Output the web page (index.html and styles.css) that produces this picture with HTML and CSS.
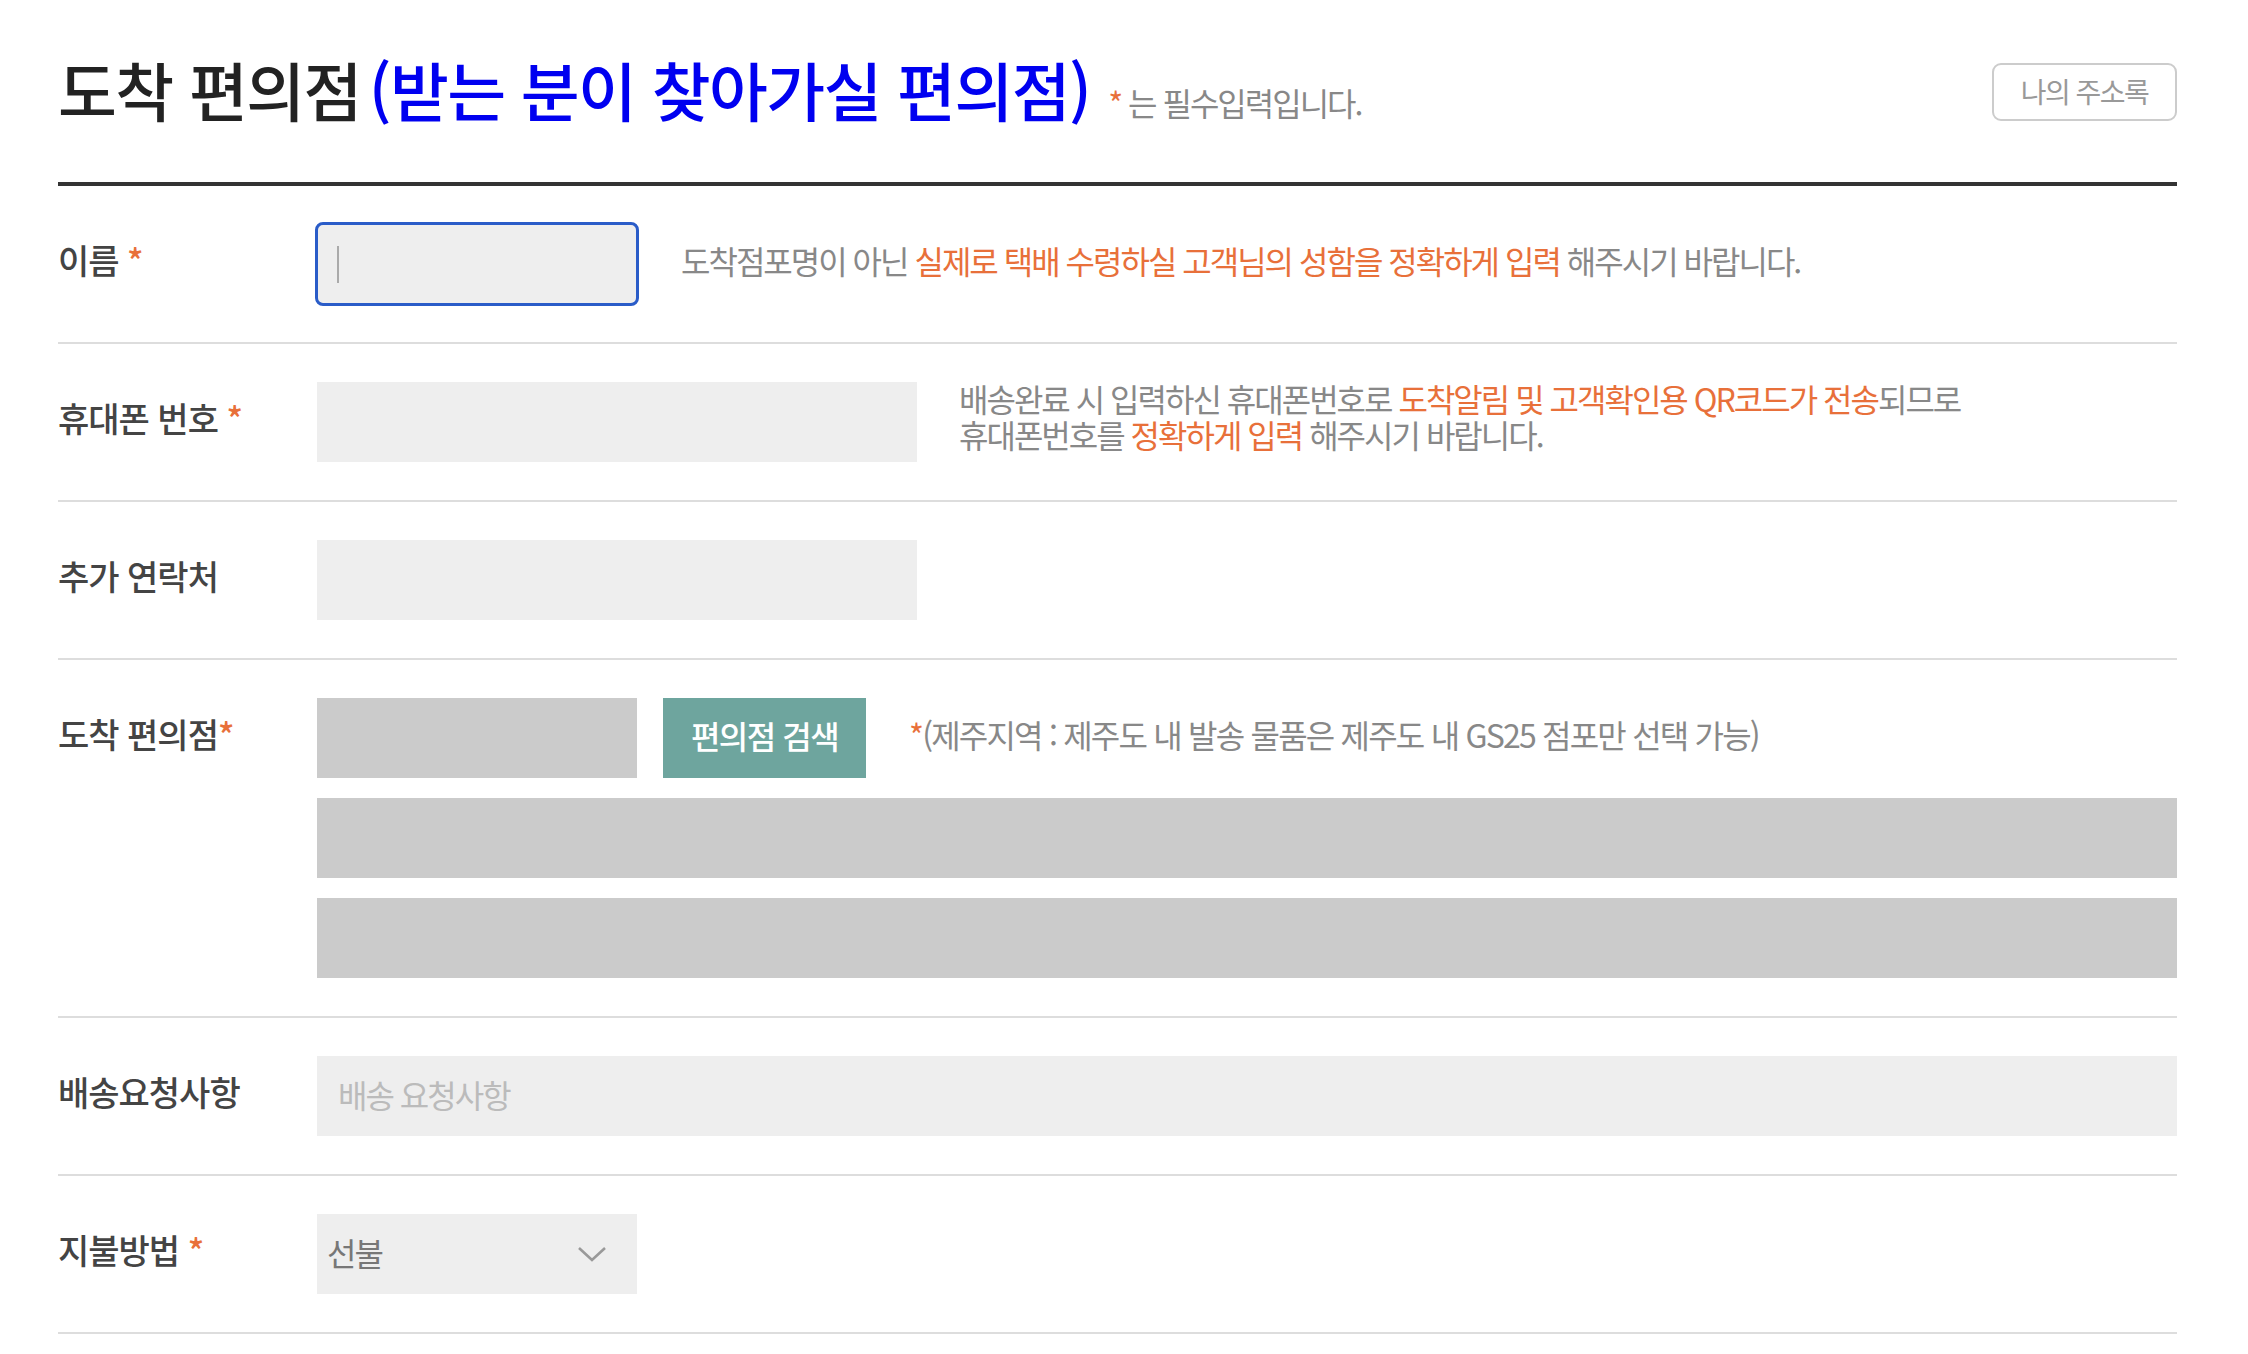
FILE: index.html
```html
<!DOCTYPE html>
<html lang="ko">
<head>
<meta charset="utf-8">
<title>도착 편의점</title>
<link rel="stylesheet" href="styles.css">
</head>
<body>
<div class="page">
  <header class="head">
    <div class="head-left">
      <h1 class="title">도착 편의점<span class="title-blue">(받는 분이 찾아가실 편의점)</span></h1>
      <p class="req-note"><span class="star">*</span> 는 필수입력입니다.</p>
    </div>
    <button class="addr-btn" type="button">나의 주소록</button>
  </header>

  <div class="form">
    <div class="row">
      <div class="label">이름 <span class="star">*</span></div>
      <div class="field">
        <div class="line">
          <div class="box box-s focused"><span class="caret"></span></div>
          <p class="desc">도착점포명이 아닌 <em>실제로 택배 수령하실 고객님의 성함을 정확하게 입력</em> 해주시기 바랍니다.</p>
        </div>
      </div>
    </div>

    <div class="row">
      <div class="label">휴대폰 번호 <span class="star">*</span></div>
      <div class="field">
        <div class="line">
          <div class="box box-m"></div>
          <p class="desc desc-2">배송완료 시 입력하신 휴대폰번호로 <em>도착알림 및 고객확인용 QR코드가 전송</em>되므로<br>휴대폰번호를 <em>정확하게 입력</em> 해주시기 바랍니다.</p>
        </div>
      </div>
    </div>

    <div class="row">
      <div class="label">추가 연락처</div>
      <div class="field">
        <div class="line">
          <div class="box box-m"></div>
        </div>
      </div>
    </div>

    <div class="row">
      <div class="label">도착 편의점<span class="star">*</span></div>
      <div class="field">
        <div class="line">
          <div class="box box-s dark"></div>
          <button class="search-btn" type="button">편의점 검색</button>
          <p class="desc store-note"><span class="star">*</span>(제주지역 : 제주도 내 발송 물품은 제주도 내 GS25 점포만 선택 가능)</p>
        </div>
        <div class="box box-full dark bar"></div>
        <div class="box box-full dark bar"></div>
      </div>
    </div>

    <div class="row">
      <div class="label">배송요청사항</div>
      <div class="field">
        <div class="box box-full placeholder">배송 요청사항</div>
      </div>
    </div>

    <div class="row">
      <div class="label">지불방법 <span class="star">*</span></div>
      <div class="field">
        <div class="box box-s select">
          <span class="select-text">선불</span>
          <svg class="chev" width="30" height="17" viewBox="0 0 30 17" aria-hidden="true"><path d="M2 2 L15 14 L28 2" fill="none" stroke="#999" stroke-width="2.6"/></svg>
        </div>
      </div>
    </div>
  </div>
</div>
</body>
</html>
```

FILE: styles.css
```css
* { box-sizing: border-box; }
html, body { margin: 0; padding: 0; background: #fff; }
body {
  font-family: "Noto Sans CJK KR", "Noto Sans", sans-serif;
  color: #333;
}
.page {
  width: 2119px;
  margin-left: 58px;
}
.head {
  display: flex;
  align-items: center;
  justify-content: space-between;
  height: 182px;
  border-bottom: 4px solid #333;
  box-sizing: content-box;
}
.head-left {
  display: flex;
  align-items: baseline;
  margin-bottom: 6px;
}
.title {
  margin: 0;
  font-size: 64px;
  font-weight: 500;
  letter-spacing: -1.6px;
  color: #222;
  line-height: 1.2;
}
.title-blue { color: #0000f0; margin-left: 8px; }
.req-note {
  margin: 0 0 0 18px;
  font-size: 32px;
  color: #888;
  letter-spacing: -2px;
}
.star { color: #e8703a; font-style: normal; }
.addr-btn {
  width: 185px;
  height: 58px;
  border: 2px solid #ccc;
  border-radius: 9px;
  background: #fff;
  color: #999;
  font-family: inherit;
  font-size: 28px;
  letter-spacing: -1.5px;
  padding: 0 0 3px;
  margin-top: 2px;
}
.row {
  display: grid;
  grid-template-columns: 259px 1fr;
  padding: 38px 0;
  border-bottom: 2px solid #ddd;
}
.label {
  height: 80px;
  line-height: 72px;
  padding-bottom: 8px;
  font-size: 34px;
  font-weight: 500;
  color: #444;
  letter-spacing: -1px;
}
.field { display: flex; flex-direction: column; }
.line { display: flex; align-items: center; height: 80px; }
.box {
  height: 80px;
  background: #eee;
  flex: none;
}
.box-s { width: 320px; }
.box-m { width: 600px; }
.box-full { width: 100%; }
.dark { background: #cbcbcb; }
.bar { margin-top: 20px; }
.focused {
  border-radius: 6px;
  outline: 3px solid #2a5cc8;
  outline-offset: -1px;
  display: flex;
  align-items: center;
  padding-left: 20px;
}
.caret {
  width: 2px;
  height: 37px;
  background: #aaa;
}
.desc {
  margin: 0 0 0 44px;
  padding-bottom: 8px;
  font-size: 32px;
  line-height: 37px;
  color: #888;
  letter-spacing: -2px;
}
.desc-2 { padding-bottom: 12px; line-height: 36px; margin-left: 42px; }
.desc em { font-style: normal; color: #e8703a; }
.search-btn {
  width: 203px;
  height: 80px;
  margin-left: 26px;
  border: 0;
  background: #6ea59e;
  color: #fff;
  font-family: inherit;
  font-size: 32px;
  font-weight: 500;
  letter-spacing: -1.5px;
  padding: 0 0 6px;
}
.store-note { margin-left: 43px; letter-spacing: -1.8px; }
.placeholder {
  display: flex;
  align-items: center;
  padding: 0 0 5px 21px;
  font-size: 32px;
  color: #bbb;
  letter-spacing: -2px;
}
.select {
  display: flex;
  align-items: center;
  justify-content: space-between;
  padding: 0 30px 0 10px;
}
.select-text {
  font-size: 32px;
  color: #777;
  letter-spacing: -2px;
  padding-bottom: 5px;
}
.chev { display: block; }
```
